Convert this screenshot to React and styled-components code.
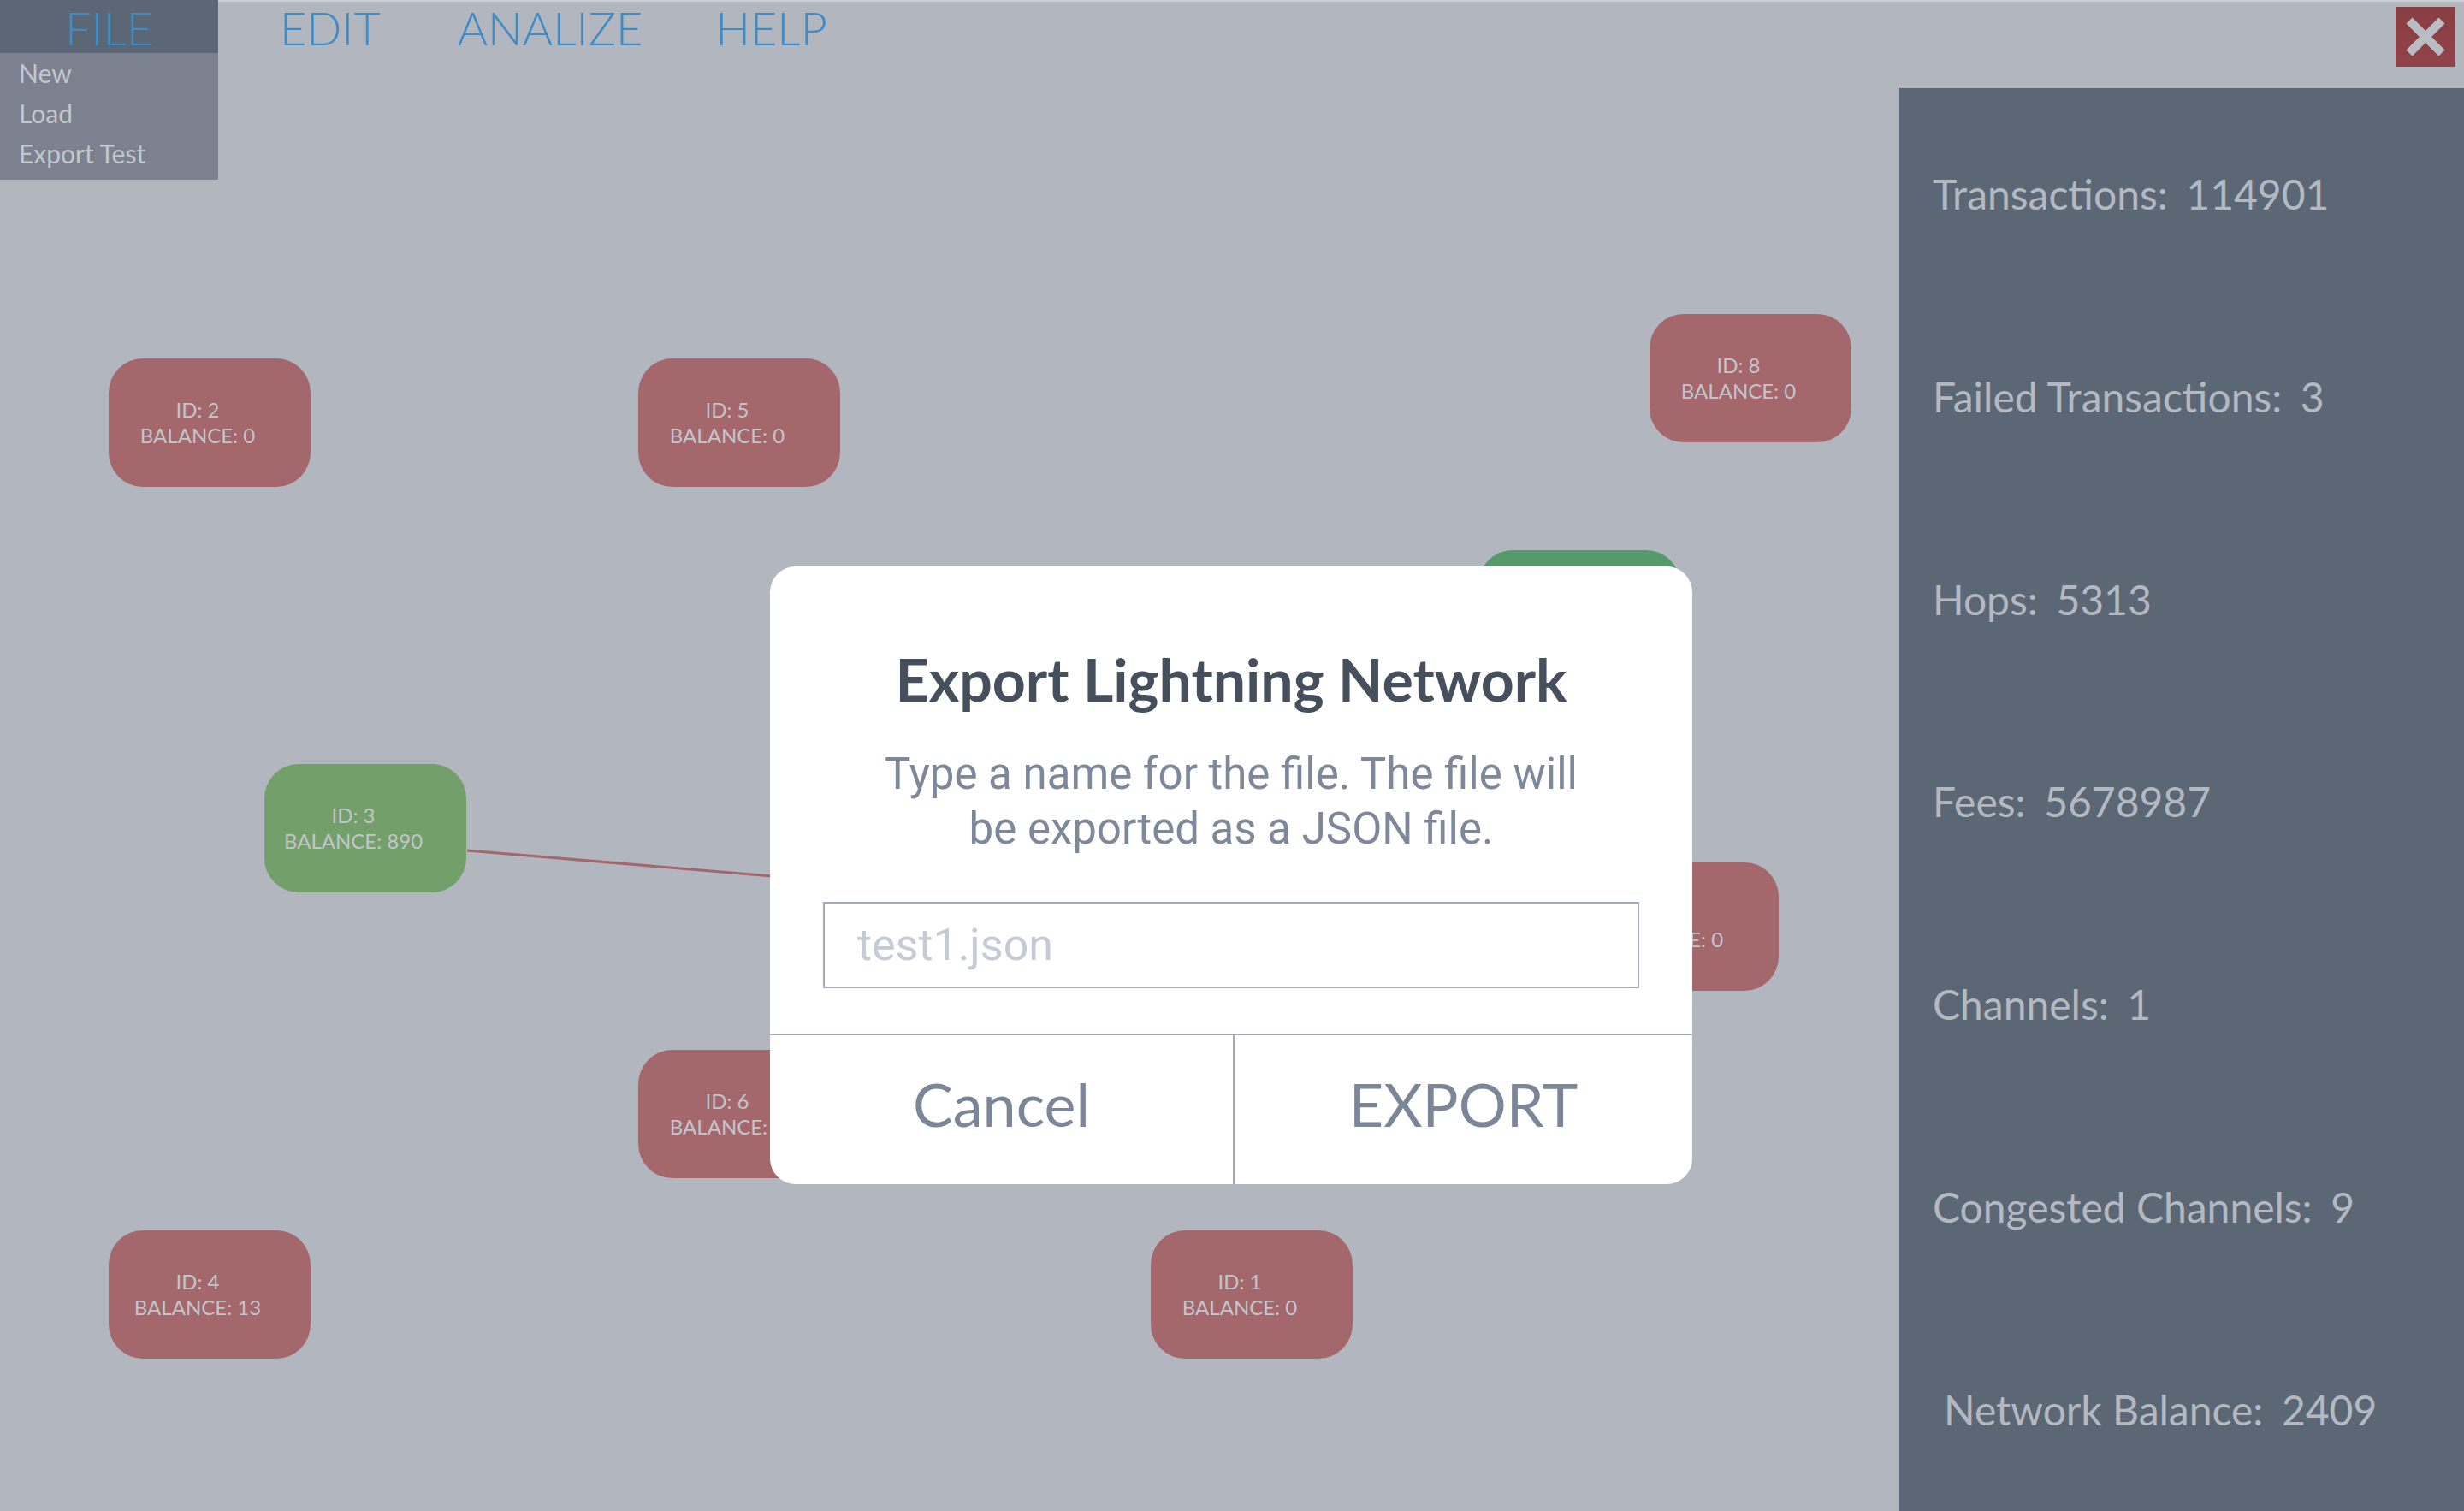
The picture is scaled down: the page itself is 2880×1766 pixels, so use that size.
import React from 'react';
import styled, { createGlobalStyle } from 'styled-components';

const nodes = [
    { id: 2, balance: 0, x: 127, y: 316, tone: 'red' },
    { id: 5, balance: 0, x: 746, y: 316, tone: 'red' },
    { id: 8, balance: 0, x: 1928, y: 264, tone: 'red' },
    { id: 7, balance: 0, x: 1728, y: 540, tone: 'bright' },
    { id: 3, balance: 890, x: 309, y: 790, tone: 'green' },
    { id: 0, balance: 0, x: 1843, y: 905, tone: 'red' },
    { id: 6, balance: 0, x: 746, y: 1124, tone: 'red' },
    { id: 4, balance: 13, x: 127, y: 1335, tone: 'red' },
    { id: 1, balance: 0, x: 1345, y: 1335, tone: 'red' },
];

const stats = [
    { label: 'Transactions:', value: '114901' },
    { label: 'Failed Transactions:', value: '3' },
    { label: 'Hops:', value: '5313' },
    { label: 'Fees:', value: '5678987' },
    { label: 'Channels:', value: '1' },
    { label: 'Congested Channels:', value: '9' },
    { label: 'Network Balance:', value: '2409', indent: true },
];

const App = () => {
    return (
        <>
            <GlobalStyle />
            <Screen>
                <TopBar>
                    <Menu>
                        <FileTab>
                            FILE
                            <Dropdown>
                                <DropItem>New</DropItem>
                                <DropItem>Load</DropItem>
                                <DropItem>Export Test</DropItem>
                            </Dropdown>
                        </FileTab>
                        <MenuItem>EDIT</MenuItem>
                        <MenuItem>ANALIZE</MenuItem>
                        <MenuItem last>HELP</MenuItem>
                    </Menu>
                    <CloseButton aria-label="close">
                        <svg width="70" height="70" viewBox="0 0 70 70">
                            <line x1="16" y1="16" x2="54" y2="54" stroke="#b9bdc4" strokeWidth="10" />
                            <line x1="54" y1="16" x2="16" y2="54" stroke="#b9bdc4" strokeWidth="10" />
                        </svg>
                    </CloseButton>
                </TopBar>

                <Canvas>
                    <Edges width="2220" height="1663">
                        <line x1="546" y1="891" x2="1400" y2="963" stroke="#a3676b" strokeWidth="3" />
                    </Edges>
                    {nodes.map((n) => (
                        <Node key={n.id} tone={n.tone} style={{ left: n.x, top: n.y }}>
                            <span>ID: {n.id}</span>
                            <span>BALANCE: {n.balance}</span>
                        </Node>
                    ))}
                </Canvas>

                <StatsPanel>
                    {stats.map((s) => (
                        <StatRow key={s.label} indent={s.indent}>
                            {s.label}
                            <StatValue>{s.value}</StatValue>
                        </StatRow>
                    ))}
                </StatsPanel>

                <Modal>
                    <ModalBody>
                        <ModalTitle>Export Lightning Network</ModalTitle>
                        <ModalText>
                            Type a name for the file. The file will
                            <br />
                            be exported as a JSON file.
                        </ModalText>
                        <FileInput placeholder="test1.json" />
                    </ModalBody>
                    <ModalFooter>
                        <ModalButton>Cancel</ModalButton>
                        <ModalButton divider>EXPORT</ModalButton>
                    </ModalFooter>
                </Modal>
            </Screen>
        </>
    );
};

// styling

const GlobalStyle = createGlobalStyle`
body{
    margin: 0;
    overflow: hidden;
    font-family: 'Lato', 'Liberation Sans', sans-serif;
}
`

const Screen = styled.div`
position: relative;
width: 2880px;
height: 1766px;
background-color: #b2b7bf;
display: grid;
grid-template-columns: 2220px 660px;
grid-template-rows: 103px 1fr;
overflow: hidden;
`

const TopBar = styled.div`
grid-column: 1 / 3;
display: flex;
align-items: flex-start;
justify-content: space-between;
box-shadow: inset 0 2px 0 #cdd0d5;
`

const Menu = styled.div`
display: flex;
align-items: flex-start;
height: 66px;
gap: 90px;
`

const FileTab = styled.div`
position: relative;
width: 255px;
height: 62px;
margin-right: -18px;
background-color: #5c6776;
color: #3f8bc5;
font-size: 54px;
font-weight: 300;
line-height: 66px;
display: flex;
justify-content: center;
z-index: 2;
`

const MenuItem = styled.div`
color: #3f8bc5;
font-size: 54px;
font-weight: 300;
line-height: 66px;
margin-left: ${(p) => (p.last ? '-5px' : '0')};
`

const Dropdown = styled.div`
position: absolute;
top: 62px;
left: 0;
width: 255px;
padding-bottom: 7px;
background-color: #7b818e;
display: flex;
flex-direction: column;
`

const DropItem = styled.div`
padding-left: 22px;
font-size: 30px;
line-height: 48px;
margin-top: -1px;
color: #c3c7cd;
font-weight: 400;
`

const CloseButton = styled.button`
width: 70px;
height: 70px;
margin: 8px 10px 0 0;
padding: 0;
border: none;
background: linear-gradient(#873e42, #93424a);
display: flex;
align-items: center;
justify-content: center;
`

const Canvas = styled.div`
position: relative;
`

const Edges = styled.svg`
position: absolute;
left: 0;
top: 0;
`

const Node = styled.div`
position: absolute;
width: 236px;
height: 150px;
box-sizing: border-box;
padding-right: 28px;
border-radius: 40px;
background-color: ${(p) => (p.tone === 'green' ? '#739f6a' : p.tone === 'bright' ? '#569a6c' : '#a4676b')};
display: flex;
flex-direction: column;
align-items: center;
justify-content: center;
color: #c2c5cb;
font-size: 24px;
line-height: 30px;
white-space: nowrap;
`

const StatsPanel = styled.div`
background-color: #5c6776;
display: flex;
flex-direction: column;
justify-content: space-around;
padding: 6px 0 0 39px;
`

const StatRow = styled.div`
color: #b4b9c1;
font-size: 48px;
line-height: 58px;
padding-left: ${(p) => (p.indent ? '13px' : '0')};
`

const StatValue = styled.span`
margin-left: 0.45em;
`

const Modal = styled.div`
position: absolute;
left: 900px;
top: 662px;
width: 1078px;
height: 722px;
background-color: #ffffff;
border-radius: 30px;
overflow: hidden;
display: flex;
flex-direction: column;
z-index: 5;
`

const ModalBody = styled.div`
height: 546px;
box-sizing: border-box;
padding: 91px 62px 0;
display: flex;
flex-direction: column;
align-items: center;
`

const ModalTitle = styled.div`
font-size: 68px;
font-weight: 700;
color: #464f5c;
line-height: 82px;
white-space: nowrap;
`

const ModalText = styled.div`
margin-top: 38px;
font-family: 'Roboto', sans-serif;
font-size: 51px;
line-height: 64px;
color: #7d889b;
text-align: center;
white-space: nowrap;
`

const FileInput = styled.input`
margin-top: 53px;
width: 100%;
height: 101px;
box-sizing: border-box;
border: 2px solid #a3abbb;
padding: 0 0 0 38px;
outline: none;
font-family: 'Roboto', sans-serif;
font-size: 52px;
color: #464f5c;
&::placeholder{
    color: #c5cbd5;
}
`

const ModalFooter = styled.div`
flex: 1;
border-top: 2px solid #a0a9ba;
display: grid;
grid-template-columns: 541px 1fr;
`

const ModalButton = styled.button`
border: none;
border-left: ${(p) => (p.divider ? '2px solid #a0a9ba' : 'none')};
background: transparent;
font-family: 'Lato', sans-serif;
font-size: 70px;
color: #7b8698;
padding: 0 0 14px;
`

export default App;
